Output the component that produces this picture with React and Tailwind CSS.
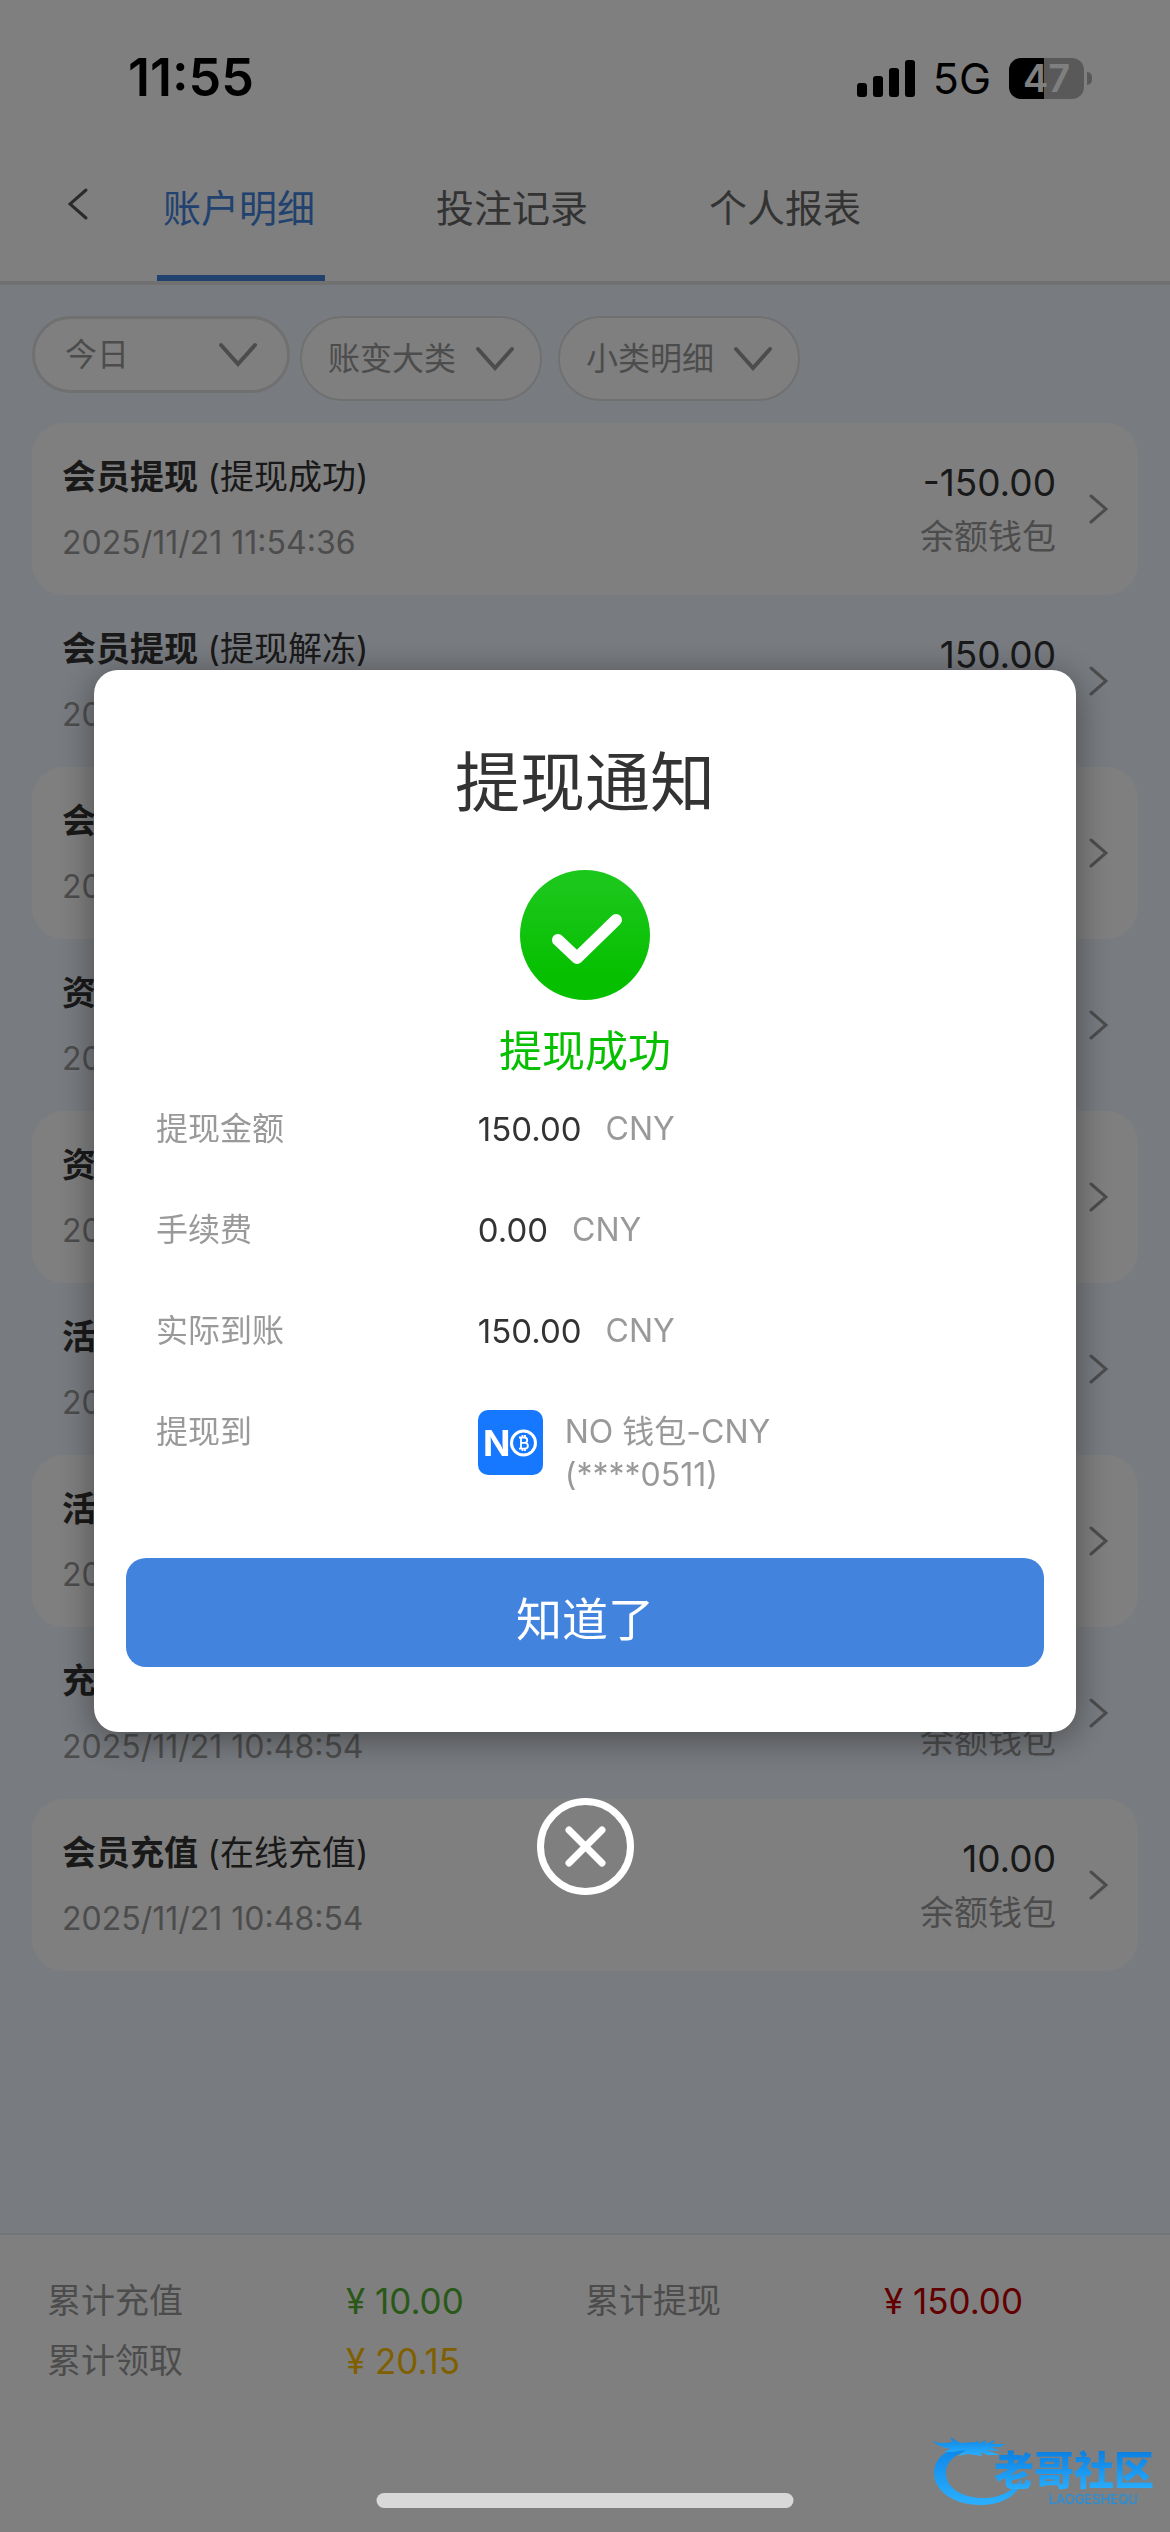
import React, { useId } from "react";

const FONT = "font-['Inter','Noto_Sans_CJK_SC',sans-serif]";

const rows = [
  { title: "会员提现", note: "(提现成功)", time: "2025/11/21 11:54:36", amount: "-150.00" },
  { title: "会员提现", note: "(提现解冻)", time: "2025/11/21 11:54:36", amount: "150.00" },
  { title: "会员提现", note: "(提现冻结)", time: "2025/11/21 11:50:12", amount: "-150.00" },
  { title: "资金转入", note: "(转入)", time: "2025/11/21 11:49:30", amount: "150.15" },
  { title: "资金转出", note: "(转出)", time: "2025/11/21 10:50:20", amount: "-30.15" },
  { title: "活动奖励", note: "(领取)", time: "2025/11/21 10:49:40", amount: "10.00" },
  { title: "活动奖励", note: "(领取)", time: "2025/11/21 10:49:10", amount: "10.00" },
  { title: "充值优惠", note: "(优惠)", time: "2025/11/21 10:48:54", amount: "0.15" },
  { title: "会员充值", note: "(在线充值)", time: "2025/11/21 10:48:54", amount: "10.00" },
];

const details = [
  { label: "提现金额", value: "150.00" },
  { label: "手续费", value: "0.00" },
  { label: "实际到账", value: "150.00" },
];

const totals = [
  { label: "累计充值", value: "¥ 10.00", color: "text-[#52b030]" },
  { label: "累计提现", value: "¥ 150.00", color: "text-[#c40000]" },
  { label: "累计领取", value: "¥ 20.15", color: "text-[#ffbe00]" },
];

function StatusBar() {
  return (
    <div className="flex h-[156px] items-center justify-between pl-32 pr-[78px]">
      <time className="text-[52px] font-semibold leading-none text-black">11:55</time>
      <div className="flex items-center">
        <svg width="60" height="38" viewBox="0 0 60 38" role="img" aria-label="信号">
          <rect x="0" y="24" width="10" height="14" rx="3" />
          <rect x="16" y="17" width="10" height="21" rx="3" />
          <rect x="32" y="9" width="10" height="29" rx="3" />
          <rect x="48" y="1" width="10" height="37" rx="3" />
        </svg>
        <span className="ml-4 mr-[18px] text-[43px] leading-none text-black">5G</span>
        <div className="flex items-center gap-[3px]">
          <div className="flex h-[41px] w-[75px] items-center justify-center rounded-xl bg-linear-to-r from-black from-47% to-[#b3b3b3] to-47% text-[38px] font-semibold leading-none text-white">
            47
          </div>
          <div className="h-[13px] w-[5px] rounded-r-full bg-[#b3b3b3]" />
        </div>
      </div>
    </div>
  );
}

function Tab({ active, children }) {
  return (
    <button
      type="button"
      role="tab"
      aria-selected={active}
      className={
        "h-[125px] w-[168px] whitespace-nowrap border-b-6 pt-[22px] pr-1 pb-[38px] text-[38px] leading-[52px] " +
        (active ? "border-[#4283de] text-[#4283de]" : "border-transparent text-[#666666]")
      }
    >
      {children}
    </button>
  );
}

function Filter({ label, className, selectClass, iconClass }) {
  return (
    <div className={"relative rounded-[42px] border-[#e1e1e1] bg-white text-[#999999] " + className}>
      <select
        aria-label={label}
        className={"h-full w-full appearance-none rounded-[42px] bg-transparent text-[32px] outline-none " + selectClass}
      >
        <option>{label}</option>
      </select>
      <svg
        className={"pointer-events-none absolute top-1/2 -translate-y-1/2 " + iconClass}
        width="38" height="26" viewBox="0 0 38 26" fill="none" stroke="currentColor" strokeWidth="4" strokeLinecap="round"
      >
        <path d="M2 3 19 22 36 3" />
      </svg>
    </div>
  );
}

function Row({ item, shaded }) {
  return (
    <li>
      <button
        type="button"
        className={"flex h-[172px] w-full items-center rounded-[32px] px-[30px] text-left " + (shaded ? "bg-white" : "")}
      >
        <div className="flex-1 pt-0.5">
          <p className="text-[34px] leading-[46px] text-[#333333]">
            <b className="font-bold">{item.title}</b> {item.note}
          </p>
          <p className="mt-5 text-[32px] leading-[46px] text-[#999999]">{item.time}</p>
        </div>
        <div className="pt-1 text-right">
          <p className="text-[37px] leading-[52px] text-[#333333]">{item.amount}</p>
          <p className="text-[34px] leading-[56px] text-[#999999]">余额钱包</p>
        </div>
        <svg className="ml-8" width="20" height="30" viewBox="0 0 20 30" fill="none" stroke="#999999" strokeWidth="3" strokeLinecap="round">
          <path d="M3 2 18 15 3 28" />
        </svg>
      </button>
    </li>
  );
}

function WalletIcon() {
  return (
    <svg width="65" height="65" viewBox="0 0 65 65" role="img" aria-label="NO钱包" className="shrink-0">
      <rect width="65" height="65" rx="10" fill="#1677ff" />
      <text x="5" y="46" fontSize="36" fontWeight="700" fill="#fff">N</text>
      <circle cx="45.500" cy="33" r="12" fill="#1677ff" stroke="#fff" strokeWidth="3" />
      <path
        d="M41 27.500h5.500a2.700 2.700 0 0 1 0 5.400H43h4a2.900 2.900 0 0 1 0 5.800h-6M43 27.500v11M44.500 25v2.500M47 25v2.500M44.500 38.700v2.300M47 38.700v2.300"
        fill="none" stroke="#fff" strokeWidth="1.800"
      />
    </svg>
  );
}

function Notice() {
  const titleId = useId();
  const gradId = useId();
  return (
    <div className="fixed inset-0 flex flex-col items-center justify-center bg-black/50 px-[94px] pt-8">
      <section
        role="dialog"
        aria-modal="true"
        aria-labelledby={titleId}
        className="w-full rounded-3xl bg-white px-8 pt-[68px] pb-[65px] text-[32px] shadow-[0_6px_36px_rgba(0,0,0,0.4)]"
      >
        <h1 id={titleId} className="text-center text-[65px] leading-[90px] text-[#333333]">提现通知</h1>
        <svg className="mx-auto mt-[42px]" width="130" height="130" viewBox="0 0 130 130" aria-hidden="true">
          <defs>
            <linearGradient id={gradId} x1="0" y1="0" x2="0" y2="1">
              <stop offset="0.1" stopColor="#1cc71c" />
              <stop offset="0.8" stopColor="#06c000" />
            </linearGradient>
          </defs>
          <circle cx="65" cy="65" r="65" fill={"url(#" + gradId + ")"} />
          <path d="M38 70 57 88 96 50" fill="none" stroke="#fff" strokeWidth="12" strokeLinecap="round" strokeLinejoin="round" />
        </svg>
        <p className="mt-5 text-center text-[43px] leading-[62px] text-[#06c000]">提现成功</p>
        <dl className="mx-[30px] mt-[25px] text-[#999999]">
          {details.map((d) => (
            <div key={d.label} className="mb-[57px] flex leading-11">
              <dt className="w-3/8">{d.label}</dt>
              <dd className="flex gap-6">
                <span className="text-[33px] text-[#333333]">{d.value}</span>
                <span>CNY</span>
              </dd>
            </div>
          ))}
          <div className="flex leading-[43px]">
            <dt className="w-3/8">提现到</dt>
            <dd className="flex items-start gap-[22px]">
              <WalletIcon />
              <span>
                NO 钱包-CNY
                <br />
                (****0511)
              </span>
            </dd>
          </div>
        </dl>
        <button type="button" className="mt-[62px] h-[109px] w-full rounded-[20px] bg-[#4283de] pt-3.5 text-[46px] text-white">
          知道了
        </button>
      </section>
      <button type="button" aria-label="关闭" className="mt-[66px]">
        <svg width="97" height="97" viewBox="0 0 97 97" fill="none" stroke="#fff" strokeWidth="7" strokeLinecap="round">
          <circle cx="48.500" cy="48.500" r="45" />
          <path d="M32 32 65 65M65 32 32 65" />
        </svg>
      </button>
    </div>
  );
}

function Watermark() {
  const gradId = useId();
  return (
    <div className="pointer-events-none fixed right-3 bottom-6 h-[72px] w-[228px]">
      <svg className="absolute inset-0" width="228" height="72" viewBox="0 0 228 72" aria-hidden="true">
        <defs>
          <linearGradient id={gradId} x1="0" y1="0" x2="0" y2="1">
            <stop offset="0" stopColor="#0a84e6" />
            <stop offset="1" stopColor="#2bb0ff" />
          </linearGradient>
        </defs>
        <g fill={"url(#" + gradId + ")"}>
          <path d="M50 8C22 8 4 20 4 37c0 18 20 32 46 32 22 0 40-10 42-27-8 13-22 20-38 20-22 0-38-10-38-25C16 24 28 15 50 12Z" />
          <path d="M3 5c6 3 12 2 20 1L20 1l10 6c8-1 14 0 20-2l-2 3 8-4-1 4 10-4-3 4 13 0-4 3-10 0 9 4-14-1 14 5-13 0-7-3 2 4-14-2-10 2 8-6-14 2-8 0 6-3C12 11 6 9 3 5Z" />
        </g>
      </svg>
      <div className="absolute right-1 top-3.5 flex flex-col items-end">
        <span className="bg-linear-to-b from-[#0a7ee0] to-[#2bb0ff] bg-clip-text text-[40px] font-black leading-[42px] text-transparent">老哥社区</span>
        <span className="mr-4 text-[13px] font-medium leading-[14px] text-[#2390dd]">LAOGESHEQU</span>
      </div>
    </div>
  );
}

export default function App() {
  return (
    <div className={"flex min-h-screen flex-col bg-[#f0f6ff] " + FONT}>
      <header className="border-b-4 border-[#e3e3e3] bg-white">
        <StatusBar />
        <div className="flex items-start">
          <button type="button" aria-label="返回" className="ml-[67px] mr-[68px] mt-[31px]">
            <svg width="22" height="34" viewBox="0 0 22 34" fill="none" stroke="#555" strokeWidth="3" strokeLinecap="round">
              <path d="M19 3 3 17 19 31" />
            </svg>
          </button>
          <div role="tablist" className="flex gap-[105px]">
            <Tab active>账户明细</Tab>
            <Tab>投注记录</Tab>
            <Tab>个人报表</Tab>
          </div>
        </div>
      </header>

      <main className="flex-1 px-8 pt-[31px]">
        <div className="mb-[22px] flex items-start">
          <Filter label="今日" className="mr-2.5 h-[77px] w-[258px] border-3" selectClass="pl-[30px]" iconClass="right-[30px]" />
          <Filter label="账变大类" className="mr-4 h-[85px] w-[242px] border-2" selectClass="pl-[26px]" iconClass="right-[26px]" />
          <Filter label="小类明细" className="h-[85px] w-[242px] border-2" selectClass="pl-[26px]" iconClass="right-[26px]" />
        </div>
        <ul>
          {rows.map((item, i) => (
            <Row key={i} item={item} shaded={i % 2 === 0} />
          ))}
        </ul>
      </main>

      <footer className="h-[299px] border-t-2 border-[#e4e9f2] bg-white px-[47px] pt-9">
        <dl className="grid grid-cols-2 text-[34px] leading-[60px]">
          {totals.map((t) => (
            <div key={t.label} className="flex">
              <dt className="w-5/9 text-[#999999]">{t.label}</dt>
              <dd className={"text-[35px] " + t.color}>{t.value}</dd>
            </div>
          ))}
        </dl>
      </footer>

      <Notice />
      <div className="fixed bottom-6 left-1/2 h-[15px] w-[417px] -translate-x-1/2 rounded-full bg-[#d8d8d8]" />
      <Watermark />
    </div>
  );
}
